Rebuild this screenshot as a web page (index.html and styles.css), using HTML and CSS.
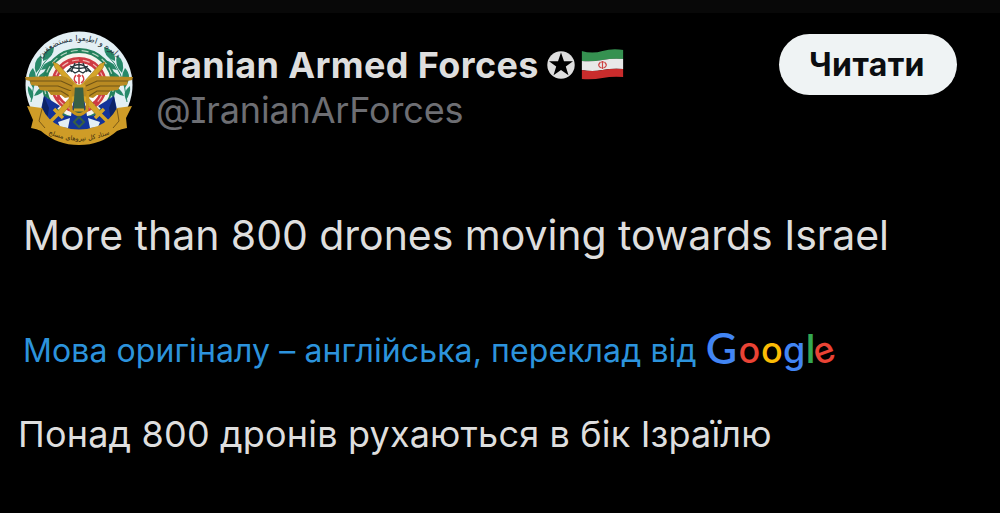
FILE: index.html
```html
<!DOCTYPE html>
<html lang="uk">
<head>
  <meta charset="utf-8">
  <title>Iranian Armed Forces</title>
  <meta name="viewport" content="width=device-width, initial-scale=1.0">
  <link rel="stylesheet" href="styles.css">
</head>
<body>
  <div class="top-strip"></div>
  <article class="post">
    <header class="post-header">
      <svg class="avatar" viewBox="0 0 110 116" aria-hidden="true">
        <defs>
          <path id="arcTop" d="M8 46A48 44 0 0 1 102 46"/>
          <path id="arcBottom" d="M20 102Q55 119 90 102"/>
          <g id="laurel" fill="#27896a">
            <path d="M9 58Q1 46 9 38Q15 48 9 58z"/>
            <path d="M12 43Q8 32 17 25Q20 36 12 43z"/>
            <path d="M19 31Q18 20 30 17Q30 27 19 31z"/>
            <path d="M12 52Q15 43 24 40Q23 50 12 52z"/>
            <path d="M17 40Q20 32 29 30Q27 39 17 40z"/>
            <path d="M8 70Q3 63 4 56Q12 62 8 70z"/>
            <path d="M10 66Q14 57 21 56Q20 64 10 66z"/>
            <path d="M7 72Q10 40 28 24" fill="none" stroke="#27896a"/>
          </g>
          <g id="wing">
            <path d="M1 47L38 46Q47 48 51 55L51 66L41 68L37 65L27 65L24 61L16 60L14 56L7 55L6 51L2 50z" fill="#b98a22"/>
            <path d="M6 51L37 51L48 56M14 56L34 56L47 61M24 61L37 61L45 66" fill="none" stroke="#705416" stroke-width="1.1"/>
          </g>
          <g id="sword">
            <path d="M32 83L76 34L81 32L79 38L36 87z" fill="#d5a529" stroke="#8b6a18" stroke-width=".5"/>
            <path d="M30 79L39 88M26 92L34 84" stroke="#d5a529" stroke-width="3.5"/>
          </g>
        </defs>
        <circle cx="55" cy="55" r="53.5" fill="#e3eff4"/>
        <use href="#laurel"/>
        <use href="#laurel" transform="matrix(-1 0 0 1 110 0)"/>
        <circle cx="55" cy="55" r="34.5" fill="#f4f4ec" stroke="#24815c" stroke-width="5"/>
        <circle cx="55" cy="55" r="34.5" fill="none" stroke="#b9d6c4" stroke-width="1.2" stroke-dasharray="7 4"/>
        <circle cx="55" cy="55" r="25" fill="#fff" stroke="#cf3b43" stroke-width="6"/>
        <circle cx="55" cy="55" r="25" fill="none" stroke="#f0b9b4" stroke-width="1.2" stroke-dasharray="7 4"/>
        <g fill="none" stroke="#26363c" stroke-width="1.3">
          <path d="M43 42Q55 27 67 42M46 36Q55 41 64 36M51 33L47 42M55 32V41M59 33L63 42"/>
          <path d="M43 42L47 40L51 43L55 41L59 43L63 40L67 42"/>
        </g>
        <path d="M20 66L36 76L32 80Q39 87 47 86L50 68H60L63 86Q71 87 78 80L74 76L90 66L94 84Q84 98 55 101Q26 98 16 84z" fill="#14349a"/>
        <path d="M20 66L25 78L23 91L17 84zM90 66L85 78L87 91L93 84z" fill="#0c2468"/>
        <path d="M34 92L46 88L44 98L36 97zM76 92L64 88L66 98L74 97z" fill="#e3eff4"/>
        <use href="#sword"/>
        <use href="#sword" transform="matrix(-1 0 0 1 110 0)"/>
        <use href="#wing"/>
        <use href="#wing" transform="matrix(-1 0 0 1 110 0)"/>
        <path d="M51 56H59L61 83L55 88L49 83z" fill="#386044"/>
        <path d="M49 56H61M50 80H60" stroke="#d1a128" stroke-width="3"/>
        <path d="M46 61L47 80Q55 89 63 80L64 61" fill="none" stroke="#c8941d" stroke-width="3"/>
        <path d="M55 87L60 92L55 97L50 92z" fill="none" stroke="#386044" stroke-width="2"/>
        <g class="emblem">
          <path d="M52 45Q48 50 53 53M58 45Q62 50 57 53M55 44V54M53 46H57"/>
        </g>
        <path d="M3 76L18 78Q24 91 36 96Q55 103 74 96Q86 91 93 78L108 76L102 88L103 98Q97 99 93 101Q77 115 55 115Q33 115 17 101Q13 99 7 98L9 90z" fill="#cf9c27"/>
        <path d="M18 79L15 91L21 98M93 79L95 91L89 98" fill="none" stroke="#795816" stroke-width="1"/>
        <text class="seal-text"><textPath href="#arcTop" startOffset="50%">دایره و اطیعوا مستضعفین</textPath></text>
        <text class="seal-text seal-text-bottom"><textPath href="#arcBottom" startOffset="50%">ستاد کل نیروهای مسلح</textPath></text>
      </svg>
      <div class="author">
        <div class="name-row">
          <span class="name">Iranian Armed Forces</span>
          <svg class="star" viewBox="0 0 28 28" aria-hidden="true">
            <circle cx="14" cy="14" r="13.7" fill="#dedede"/>
            <path d="M14 1.5L17 10.2H26L18.8 15.6L21.5 24.3L14 19L6.5 24.3L9.2 15.6L2 10.2H11z"/>
          </svg>
          <svg class="flag" viewBox="0 0 42 32" aria-hidden="true">
            <clipPath id="wave"><path d="M0 2Q11 5 21 2T42 1V28Q31 27 21 29T0 30z"/></clipPath>
            <g clip-path="url(#wave)">
              <path d="M0 0H42V10Q31 9 21 11T0 12z" fill="#359150"/>
              <path d="M0 12Q11 13 21 11T42 10V20Q31 19 21 21T0 21z" fill="#e8e8e8"/>
              <path d="M0 21Q11 23 21 21T42 20V32H0z" fill="#c92c2c"/>
            </g>
            <path d="M19 13Q15 17 20 19M23 13Q27 17 22 19M21 12V20M19.5 13H22.5" fill="none" stroke="#cf4444" stroke-width="1.2"/>
          </svg>
        </div>
        <div class="handle">@IranianArForces</div>
      </div>
      <button class="follow">Читати</button>
    </header>
    <p class="text">More than 800 drones moving towards Israel</p>
    <div class="source">
      <span class="source-label">Мова оригіналу – англійська, переклад від</span>
      <span class="google"><span class="blue big">G</span><span class="red">o</span><span class="yellow">o</span><span class="blue">g</span><span class="green thin">l</span><span class="red tilt">e</span></span>
    </div>
    <p class="translation">Понад 800 дронів рухаються в бік Ізраїлю</p>
  </article>
</body>
</html>
```
FILE: styles.css
```css
body {
  margin: 0;
  height: 513px;
  overflow: hidden;
  background: #000;
  color: #dedede;
  font-family: Inter, "Liberation Sans", sans-serif;
}
.top-strip {
  height: 13px;
  background: #080808;
}
.post {
  padding: 17px 43px 0 23px;
}
.post-header {
  display: flex;
  align-items: flex-start;
  height: 116px;
}
.avatar {
  width: 110px;
  height: 116px;
  margin-left: 1px;
  flex: none;
}
.emblem {
  fill: none;
  stroke: #d43c43;
  stroke-width: 1.5;
}
.seal-text {
  font: 8px "DejaVu Sans", sans-serif;
  text-anchor: middle;
  fill: #26333c;
}
.seal-text-bottom {
  font-size: 6.5px;
  fill: #3b2c0d;
}
.author {
  padding: 12px 0 0 22px;
  white-space: nowrap;
}
.name-row {
  display: flex;
  align-items: center;
  height: 46px;
}
.name {
  width: 391px;
  font-size: 36px;
  font-weight: 650;
  letter-spacing: 0.38px;
}
.star {
  width: 28px;
  height: 28px;
}
.flag {
  width: 43px;
  height: 32px;
  margin-left: 6px;
}
.handle {
  height: 46px;
  line-height: 44px;
  font-size: 36px;
  letter-spacing: -0.15px;
  color: #6d6e73;
  font-feature-settings: "cv08";
}
.follow {
  width: 178px;
  height: 61px;
  margin: 4px 0 0 auto;
  padding: 0 2px 0 0;
  border: 0;
  border-radius: 31px;
  background: #eff3f4;
  color: #0b0d10;
  font: 700 32px Inter, sans-serif;
  letter-spacing: 0.4px;
}
.text {
  margin: 64px 0 0;
  height: 50px;
  line-height: 50px;
  font-size: 41px;
  letter-spacing: -0.04px;
  white-space: nowrap;
}
.source {
  display: flex;
  margin-top: 66px;
  height: 50px;
  line-height: 50px;
  color: #2c93dc;
  white-space: nowrap;
}
.source-label {
  width: 682px;
  font-size: 32px;
  letter-spacing: 0.09px;
}
.google {
  display: flex;
  font-size: 36px;
  font-weight: 500;
  line-height: 48px;
}
.google span {
  width: 22.5px;
  text-align: center;
}
.google .big {
  width: 33px;
  font-family: Lato, sans-serif;
  font-size: 43px;
  font-weight: 600;
  line-height: 44px;
}
.google .thin {
  width: 7px;
  font-size: 40px;
  line-height: 46px;
}
.blue { color: #4285f4; }
.red { color: #ea4335; }
.yellow { color: #fbbc05; }
.green { color: #34a853; }
.google .tilt {
  width: 21px;
  transform: rotate(-20deg);
}
.translation {
  margin: 33px 0 0 -5px;
  height: 50px;
  line-height: 50px;
  font-size: 36px;
  letter-spacing: 0.17px;
  white-space: nowrap;
}
```
